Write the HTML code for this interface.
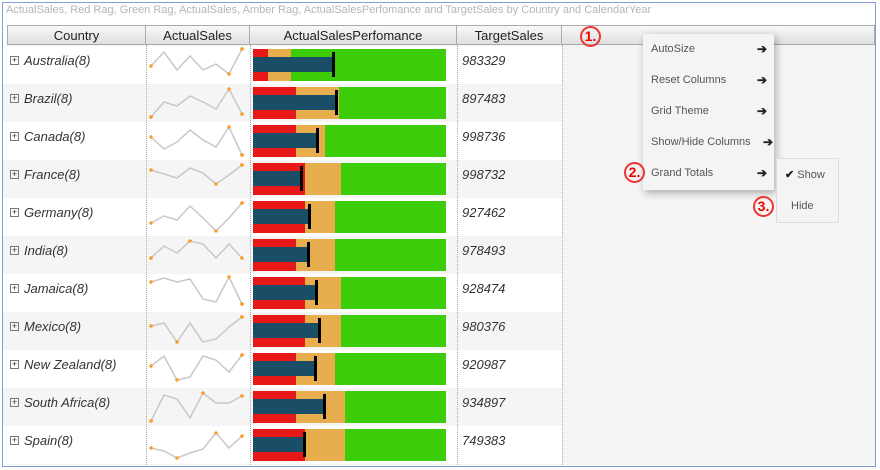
<!DOCTYPE html><html><head><style>
body{margin:0;width:880px;height:470px;background:#fff;font-family:"Liberation Sans",sans-serif;position:relative;overflow:hidden}
.a{position:absolute}
.frame{left:2px;top:2px;width:872px;height:463px;border:1px solid #7f9fd6}
.title{left:6px;top:4px;font-size:11px;color:#b5b5b5}
.hdr{top:25px;height:20px;background:linear-gradient(#f8f8f8,#e0e0e0);border-top:1px solid #aaa;border-bottom:1px solid #aaa;font-size:13px;color:#222;text-align:center;line-height:20px;box-sizing:border-box;border-right:1px solid #aaa}
.c{font-size:13px;font-style:italic;color:#333;left:24px}
.pl{left:10px;width:9px;height:9px;border:1px solid #777;box-sizing:border-box;font-size:9px;line-height:7px;text-align:center;font-style:normal;color:#333}
.vl{width:0;border-left:1px dotted #aaa;top:45px;height:420px}
.t{font-size:13px;font-style:italic;color:#333;left:462px}
.menu{left:643px;top:34px;width:131px;height:156px;background:#f4f4f4;box-shadow:2px 3px 8px rgba(0,0,0,.3);font-size:11px;color:#555}
.mi{left:8px;height:31px;line-height:31px;width:120px}
.ar{right:4px;top:0;font-weight:bold;color:#222;font-size:12px}
.num{color:#e00;font-weight:bold;border:2px solid #e33;border-radius:50%;width:17px;height:17px;line-height:17px;text-align:center;font-size:14px}
</style></head><body>
<div class="a frame"></div>
<div class="a title">ActualSales, Red Rag, Green Rag, ActualSales, Amber Rag, ActualSalesPerfomance and TargetSales by Country and CalendarYear</div>
<div class="a" style="left:3px;top:45px;width:872px;height:420px;background:#f5f5f5"></div>
<div class="a hdr" style="left:7px;width:139px;border-left:1px solid #aaa">Country</div>
<div class="a hdr" style="left:146px;width:104px">ActualSales</div>
<div class="a hdr" style="left:250px;width:207px">ActualSalesPerfomance</div>
<div class="a hdr" style="left:457px;width:105px">TargetSales</div>
<div class="a hdr" style="left:562px;width:313px"></div>
<svg class="a" style="left:0;top:0" width="880" height="470">
<g id="rows"></g>
</svg>
<div id="g"></div>
<div class="a vl" style="left:146px"></div><div class="a vl" style="left:250px"></div><div class="a vl" style="left:457px"></div><div class="a vl" style="left:562px"></div>
<div class="a menu">
<div class="a mi" style="top:0">AutoSize<span class="a ar">➔</span></div>
<div class="a mi" style="top:31px">Reset Columns<span class="a ar">➔</span></div>
<div class="a mi" style="top:62px">Grid Theme<span class="a ar">➔</span></div>
<div class="a mi" style="top:93px">Show/Hide Columns<span class="a ar" style="right:-2px">➔</span></div>
<div class="a mi" style="top:124px">Grand Totals<span class="a ar">➔</span></div>
</div>
<div class="a" style="left:776px;top:158px;width:61px;height:63px;background:#f4f4f4;border:1px solid #ddd;font-size:11px;color:#555">
<div class="a" style="left:8px;top:9px"><b style="color:#222">✔</b> Show</div><div class="a" style="left:14px;top:41px">Hide</div></div>
<div class="a num" style="left:580px;top:26px">1.</div>
<div class="a num" style="left:624px;top:162px">2.</div>
<div class="a num" style="left:753px;top:196px">3.</div>
<script>
var d=[["Australia",983329,268,291,332,"20,6,24,10,24,18,28,3"],["Brazil",897483,296,339,335,"33,18,22,12,18,25,5,30"],["Canada",998736,296,325,316,"15,27,20,8,18,25,5,33"],["France",998732,305,341,300,"10,14,18,8,13,24,15,5"],["Germany",927462,305,335,308,"25,18,22,8,20,33,20,5"],["India",978493,296,335,307,"22,10,17,5,8,22,8,22"],["Jamaica",928474,305,341,315,"8,4,8,5,25,28,3,30"],["Mexico",980376,305,341,318,"14,11,30,11,30,27,15,5"],["New Zealand",920987,296,335,314,"16,6,30,27,6,10,22,5"],["South Africa",934897,296,345,323,"33,7,11,30,5,15,15,8"],["Spain",749383,305,345,303,"22,25,32,27,23,7,22,10"]];
var s="",h="";
d.forEach(function(r,i){var y=46+i*38;
s+='<rect x="3" y="'+y+'" width="559" height="38" fill="'+(i%2?'#f5f5f5':'#fff')+'"/>';
var v=r[5].split(','),pts=v.map(function(q,j){return (151+j*13)+','+(y+ +q)}).join(' ');
s+='<polyline points="'+pts+'" fill="none" stroke="#c8c8c8" stroke-width="1.5"/>';
var mn=0,mx=0;v.forEach(function(q,j){if(+q>+v[mn])mn=j;if(+q<+v[mx])mx=j;});
[0,mn,mx,7].forEach(function(j){s+='<circle cx="'+(151+j*13)+'" cy="'+(y+ +v[j])+'" r="1.8" fill="#f7a030"/>'});
s+='<rect x="253" y="'+(y+3)+'" width="193" height="32" fill="#3ccc08"/><rect x="253" y="'+(y+3)+'" width="'+(r[3]-253)+'" height="32" fill="#e8ad4c"/><rect x="253" y="'+(y+3)+'" width="'+(r[2]-253)+'" height="32" fill="#e81818"/><rect x="253" y="'+(y+11)+'" width="'+(r[4]-253)+'" height="15" fill="#1a4e66"/><rect x="'+(r[4])+'" y="'+(y+6)+'" width="3" height="25" fill="#000"/>';
h+='<div class="a pl" style="left:10px;top:'+(y+10)+'px">+</div><div class="a c" style="top:'+(y+7)+'px">'+r[0]+'(8)</div><div class="a t" style="top:'+(y+7)+'px">'+r[1]+'</div>';});
document.getElementById('rows').innerHTML=s;document.getElementById('g').innerHTML=h;
</script>
</body></html>
